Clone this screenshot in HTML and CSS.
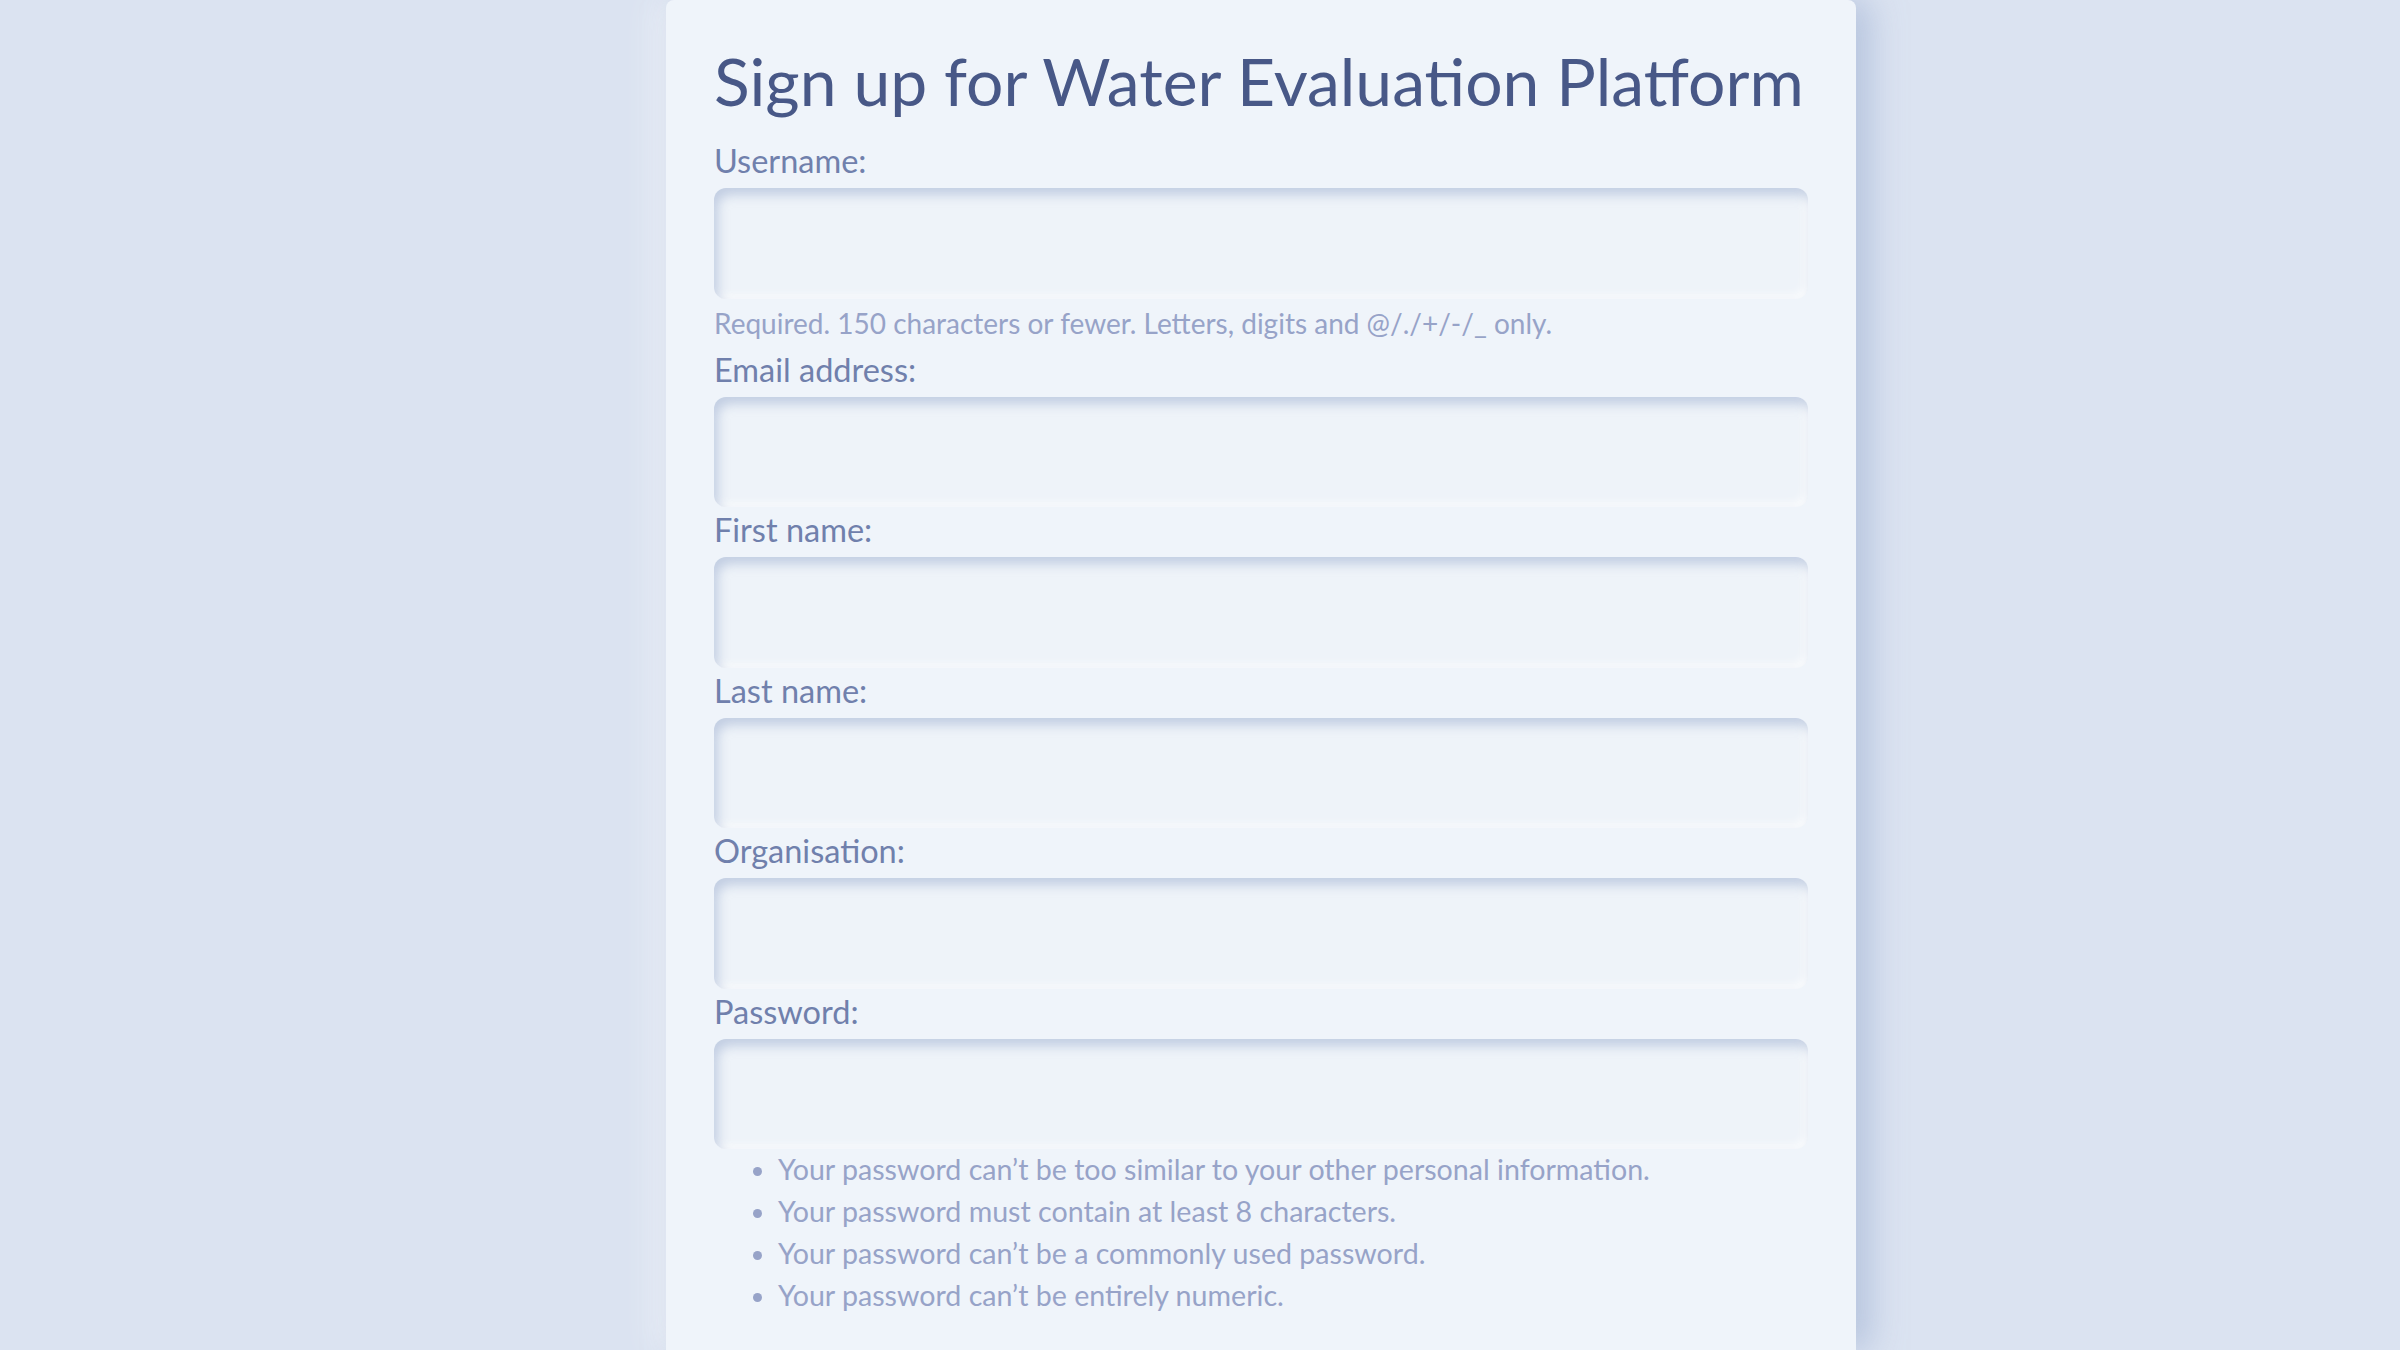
FILE: index.html
```html
<!DOCTYPE html>
<html lang="en">
<head>
<meta charset="utf-8">
<title>Sign up</title>
<link rel="stylesheet" href="styles.css">
</head>
<body>
<main class="card">
  <h1 class="title">Sign up for Water Evaluation Platform</h1>
  <form class="form">
    <label class="label" for="id_username">Username:</label>
    <input class="input" type="text" id="id_username">
    <div class="help">Required. 150 characters or fewer. Letters, digits and @/./+/-/_ only.</div>

    <label class="label" for="id_email">Email address:</label>
    <input class="input" type="email" id="id_email">

    <label class="label" for="id_first">First name:</label>
    <input class="input" type="text" id="id_first">

    <label class="label" for="id_last">Last name:</label>
    <input class="input" type="text" id="id_last">

    <label class="label" for="id_org">Organisation:</label>
    <input class="input" type="text" id="id_org">

    <label class="label" for="id_password">Password:</label>
    <input class="input" type="password" id="id_password">
    <ul class="rules">
      <li>Your password can’t be too similar to your other personal information.</li>
      <li>Your password must contain at least 8 characters.</li>
      <li>Your password can’t be a commonly used password.</li>
      <li>Your password can’t be entirely numeric.</li>
    </ul>
  </form>
</main>
</body>
</html>
```
FILE: styles.css
```css
html, body {
  margin: 0;
  padding: 0;
}
body {
  background: #dbe3f1;
  font-family: "Lato", "Noto Sans", sans-serif;
  overflow: hidden;
  height: 100vh;
}
.card {
  box-sizing: border-box;
  width: 1190px;
  height: 100vh;
  margin-left: 666px;
  padding: 42px 48px 0;
  background: #eff4fa;
  border-radius: 8px 8px 0 0;
  box-shadow: 14px 0 34px rgba(150, 170, 205, 0.55), -14px 0 30px rgba(255, 255, 255, 0.45);
}
.title {
  margin: 0 0 18px;
  font-size: 66px;
  line-height: 78px;
  font-weight: 400;
  color: #485887;
}
.form {
  display: flex;
  flex-direction: column;
}
.label {
  display: block;
  font-size: 32.5px;
  line-height: 46px;
  margin-bottom: 4px;
  color: #7080ac;
}
.input {
  display: block;
  box-sizing: border-box;
  width: 100%;
  height: 110.5px;
  margin: 0;
  border: none;
  outline: none;
  border-radius: 12px;
  background: #eef3f9;
  box-shadow: inset 4px 7px 11px rgba(165, 182, 212, 0.6), inset -4px -4px 8px rgba(255, 255, 255, 0.75);
}
.help {
  font-size: 28px;
  line-height: 48px;
  color: #97a3c8;
}
.rules {
  margin: -1px 0 0;
  padding: 0 0 0 64px;
  font-size: 28.6px;
  line-height: 42px;
  color: #97a3c8;
}
```
